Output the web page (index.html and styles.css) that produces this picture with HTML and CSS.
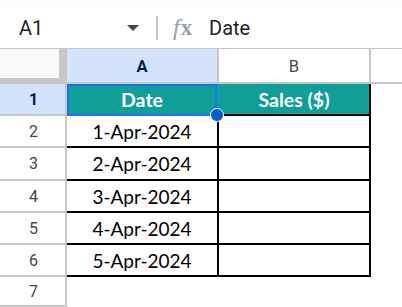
FILE: index.html
```html
<!DOCTYPE html>
<html>
<head>
<meta charset="utf-8">
<link rel="stylesheet" href="styles.css">
</head>
<body>
<div class="top-strip"></div>
<div class="formula-bar">
  <div class="name-box">
    <span class="name">A1</span>
    <span class="arrow"></span>
  </div>
  <div class="divider"></div>
  <span class="fx"><span class="fx-f">f</span><span class="fx-x">x</span></span>
  <span class="formula">Date</span>
</div>
<div class="sheet">
  <div class="corner"></div>
  <div class="col-head sel">A</div>
  <div class="col-head">B</div>
  <div class="col-head last"></div>

  <div class="row-head sel">1</div>
  <div class="cell head a1">Date<div class="selection"><span class="handle"></span></div></div>
  <div class="cell head tb-right">Sales ($)</div>
  <div class="cell plain last"></div>

  <div class="row-head">2</div>
  <div class="cell tb">1-Apr-2024</div>
  <div class="cell tb tb-right"></div>
  <div class="cell plain last"></div>

  <div class="row-head">3</div>
  <div class="cell tb">2-Apr-2024</div>
  <div class="cell tb tb-right"></div>
  <div class="cell plain last"></div>

  <div class="row-head">4</div>
  <div class="cell tb">3-Apr-2024</div>
  <div class="cell tb tb-right"></div>
  <div class="cell plain last"></div>

  <div class="row-head">5</div>
  <div class="cell tb">4-Apr-2024</div>
  <div class="cell tb tb-right"></div>
  <div class="cell plain last"></div>

  <div class="row-head">6</div>
  <div class="cell tb">5-Apr-2024</div>
  <div class="cell tb tb-right"></div>
  <div class="cell plain last"></div>

  <div class="row-head">7</div>
  <div class="cell empty"></div>
  <div class="cell empty"></div>
  <div class="cell empty last"></div>
</div>
</body>
</html>
```

FILE: styles.css
```css
* { box-sizing: border-box; }
html, body { margin: 0; padding: 0; background: #ffffff; overflow: hidden; }
body { width: 402px; height: 307px; font-family: Roboto, "Liberation Sans", sans-serif; }

.top-strip { height: 7px; background: #f9fbfd; }

.formula-bar {
  height: 42px;
  border-bottom: 1px solid #c7c7c7;
  display: flex;
  align-items: center;
  background: #ffffff;
}
.name-box {
  width: 156px;
  display: flex;
  align-items: center;
  padding-left: 19px;
  padding-right: 17px;
}
.name { font-size: 20px; color: #1f1f1f; flex: 1; }
.arrow {
  width: 0; height: 0;
  border-left: 6px solid transparent;
  border-right: 6px solid transparent;
  border-top: 6px solid #444746;
}
.divider { width: 2px; height: 24px; background: #c7c7c7; }
.fx {
  margin-left: 15px;
  width: 36px;
  font-family: "Liberation Serif", "DejaVu Serif", serif;
  font-size: 24px;
  color: #9aa0a6;
  display: flex;
  align-items: baseline;
}
.fx-f { font-style: italic; }
.fx-x { font-weight: 700; margin-left: 1px; font-size: 23px; }
.formula { font-size: 20px; color: #1f1f1f; }

.sheet {
  display: grid;
  grid-template-columns: 67px 152px 152px 1fr;
  grid-template-rows: 35px 32px 32px 33px 32px 32px 32px 1fr;
  height: 258px;
}
.corner {
  background: #f8f9fa;
  border-right: 8px solid #c7c7c7;
  border-bottom: 6px solid #c7c7c7;
}
.col-head {
  display: flex; align-items: center; justify-content: center;
  border-right: 2px solid #c7c7c7;
  border-bottom: 2px solid #c7c7c7;
  font-size: 16.5px;
  color: #444746;
  padding-top: 1px;
}
.col-head.sel { background: #d3e3fd; color: #041e49; font-weight: 700; }
.col-head.last { border-right: none; }

.row-head {
  display: flex; align-items: center; justify-content: center;
  border-right: 2px solid #c7c7c7;
  border-bottom: 2px solid #c7c7c7;
  font-size: 16px;
  color: #444746;
  padding-left: 2px;
}
.row-head.sel { background: #d3e3fd; color: #041e49; font-weight: 700; }

.cell {
  display: flex; align-items: center; justify-content: center;
  font-family: Lato, "Open Sans", sans-serif;
  font-size: 19px;
  color: #000000;
  border-right: 2px solid #e2e3e3;
  border-bottom: 2px solid #e2e3e3;
}
.cell.head {
  background: #109e99;
  color: #ffffff;
  font-weight: 700;
  font-size: 19.5px;
  border-right-color: #109e99;
  border-bottom-color: #000000;
  padding-top: 1px;
}
.cell.a1 { position: relative; }
.cell.tb { border-right-color: #000000; border-bottom-color: #000000; }
.cell.tb-right { border-right-color: #000000; }
.cell.plain { border-right: none; border-bottom-color: #ffffff; }
.cell.empty { border-right-color: #ffffff; border-bottom: none; }
.cell.last { border-right: none; }

.selection {
  position: absolute;
  left: 0; top: 0; right: 0; bottom: -2px;
  border: 2px solid #1a73e8;
}
.handle {
  position: absolute;
  right: -9px; bottom: -8px;
  width: 14px; height: 14px;
  border-radius: 50%;
  background: #0b57d0;
  border: 1px solid #ffffff;
}
```
